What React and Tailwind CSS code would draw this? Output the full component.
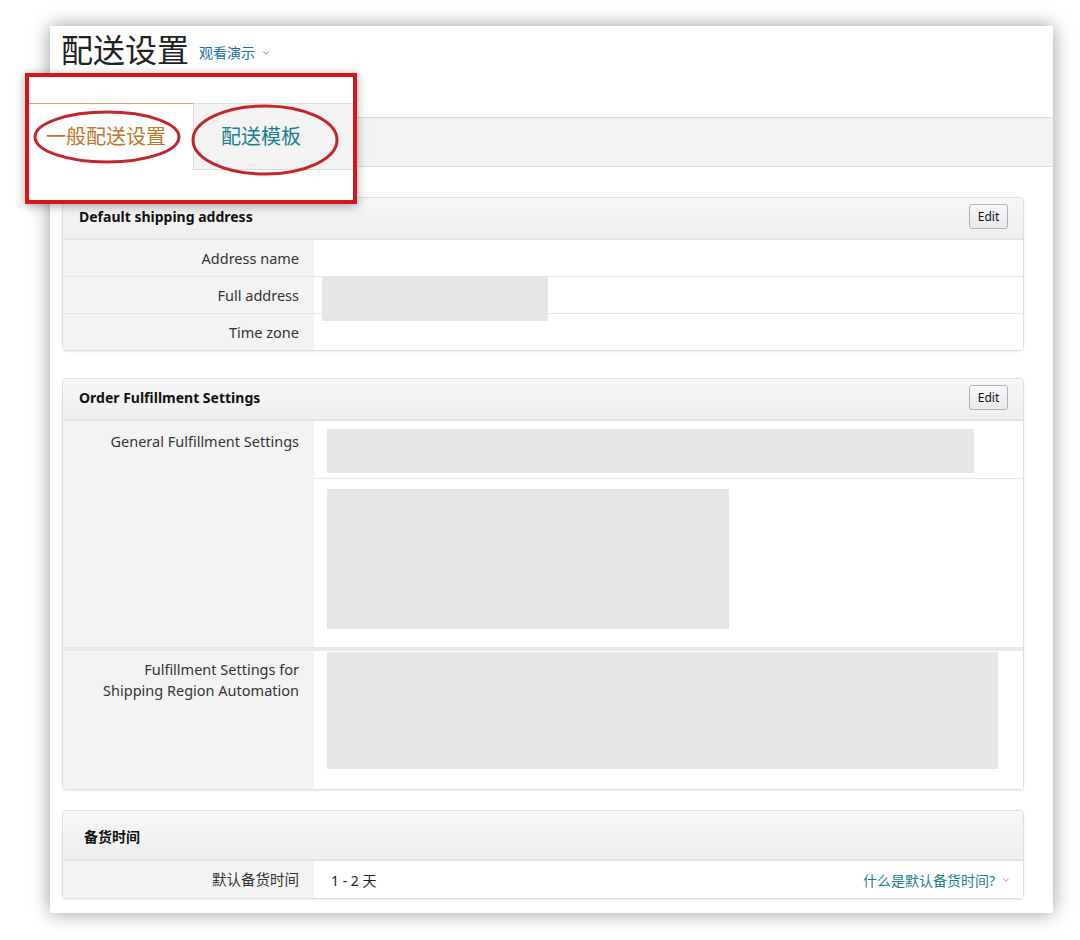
import { ChevronDown } from "lucide-react";

const font = { fontFamily: '"Noto Sans", "Noto Sans CJK SC", sans-serif' };

function EditButton() {
  return (
    <button className="h-[25px] w-[39px] rounded-[3px] border border-[#adb1b8] bg-gradient-to-b from-[#f7f8fa] to-[#e7e9ec] text-[12px] text-[#111] shadow-[0_1px_0_rgba(255,255,255,0.6)_inset]">
      Edit
    </button>
  );
}

function SectionHeader({ title, edit, tall }) {
  return (
    <div
      className={`flex items-center justify-between rounded-t-[4px] border-b-2 border-[#e3e3e3] bg-gradient-to-b from-[#f7f7f7] to-[#efefef] ${
        tall ? "h-[50px] pl-[21px] pt-[2px]" : "h-[42px] pl-[16px] pb-[3px]"
      } pr-[15px]`}
    >
      <span className="text-[14px] font-bold text-[#111]">{title}</span>
      {edit && <EditButton />}
    </div>
  );
}

function Row({ label, children, last }) {
  return (
    <div className={`flex ${last ? "" : "border-b border-[#e7e7e7]"}`}>
      <div className="w-[251px] shrink-0 bg-[#f3f3f3] pr-[15px] text-right text-[14.5px] leading-[36px] text-[#333]">
        {label}
      </div>
      <div className="relative flex-1 bg-white">{children}</div>
    </div>
  );
}

function Block({ className }) {
  return <div className={`bg-[#e7e6e7] ${className}`} />;
}

export default function App() {
  return (
    <div className="relative h-[940px] w-[1080px] overflow-hidden bg-white" style={font}>
      <div className="pl-[50px] pt-[26px]">
        <div className="h-[887px] w-[1003px] bg-white shadow-[0_0_18px_rgba(0,0,0,0.4)]">
          {/* Title */}
          <div className="flex h-[91px] items-start gap-[10px] pl-[11px] pt-[2px]">
            <h1 className="text-[32px] leading-[44px] text-[#222]">配送设置</h1>
            <span className="mt-[14px] flex items-center gap-[6px] text-[14px] text-[#1a6ea8]">
              观看演示
              <ChevronDown size={10} className="text-[#777]" />
            </span>
          </div>

          {/* Tab band */}
          <div className="h-[50px] border-y border-[#dcdcdc] bg-[#f3f3f3]" />

          <div className="mx-[12px] mt-[30px] w-[962px]">
            {/* Default shipping address */}
            <div className="rounded-[4px] border border-[#dedede] shadow-[0_1px_2px_rgba(0,0,0,0.08)]">
              <SectionHeader title="Default shipping address" edit />
              <Row label="Address name" />
              <Row label="Full address">
                <Block className="absolute left-[8px] top-[-1px] z-10 h-[45px] w-[226px]" />
              </Row>
              <Row label="Time zone" last />
            </div>

            {/* Order Fulfillment Settings */}
            <div className="mt-[27px] rounded-[4px] border border-[#dedede] shadow-[0_1px_2px_rgba(0,0,0,0.08)]">
              <SectionHeader title="Order Fulfillment Settings" edit />
              <div className="flex border-b-4 border-[#e8e8e8]">
                <div className="w-[251px] shrink-0 bg-[#f3f3f3] pr-[15px] pt-[10px] text-right text-[14.5px] leading-[21px] text-[#333]">
                  General Fulfillment Settings
                </div>
                <div className="flex-1 bg-white">
                  <div className="h-[58px] border-b border-[#e7e7e7] pl-[13px] pt-[8px]">
                    <Block className="h-[44px] w-[647px]" />
                  </div>
                  <div className="h-[168px] pl-[13px] pt-[10px]">
                    <Block className="h-[140px] w-[402px]" />
                  </div>
                </div>
              </div>
              <div className="flex">
                <div className="w-[251px] shrink-0 bg-[#f3f3f3] pr-[15px] pt-[8px] text-right text-[14.5px] leading-[21px] text-[#333]">
                  Fulfillment Settings for
                  <br />
                  Shipping Region Automation
                </div>
                <div className="h-[138px] flex-1 bg-white pl-[13px] pt-[1px]">
                  <Block className="h-[117px] w-[671px]" />
                </div>
              </div>
            </div>

            {/* 备货时间 */}
            <div className="mt-[20px] rounded-[4px] border border-[#dedede] shadow-[0_1px_2px_rgba(0,0,0,0.08)]">
              <SectionHeader title="备货时间" tall />
              <Row label="默认备货时间" last>
                <div className="flex h-[37px] items-center justify-between pl-[17px] pr-[12px] pt-[1px] text-[14px]">
                  <span className="text-[#222]">1 - 2 天</span>
                  <span className="flex items-center gap-[6px] text-[#1c7d8f]">
                    什么是默认备货时间?
                    <ChevronDown size={10} className="text-[#888]" />
                  </span>
                </div>
              </Row>
            </div>
          </div>
        </div>
      </div>

      {/* Red callout over the tabs */}
      <div className="absolute left-[25px] top-[73px] h-[131px] w-[332px] border-4 border-[#d8151d] bg-white shadow-[0_2px_10px_rgba(0,0,0,0.35)]">
        <div className="mt-[26px] flex h-[67px] bg-[#f3f3f3]">
          <div className="flex w-[165px] items-center justify-center border-r border-t border-[#dcdcdc] border-t-[#d9a46a] bg-white pr-[10px] text-[20px] text-[#c0752d]">
            一般配送设置
          </div>
          <div className="flex flex-1 items-center border-y border-[#dcdcdc] pl-[27px] text-[20px] text-[#1c7d8f]">
            配送模板
          </div>
        </div>
        <svg className="absolute left-[-4px] top-[-4px]" width="332" height="131" viewBox="0 0 332 131">
          <ellipse cx="82" cy="64" rx="72" ry="25" fill="none" stroke="#c3262d" strokeWidth="3" />
          <ellipse cx="240" cy="67" rx="72" ry="34" fill="none" stroke="#c3262d" strokeWidth="3" />
        </svg>
      </div>
    </div>
  );
}
